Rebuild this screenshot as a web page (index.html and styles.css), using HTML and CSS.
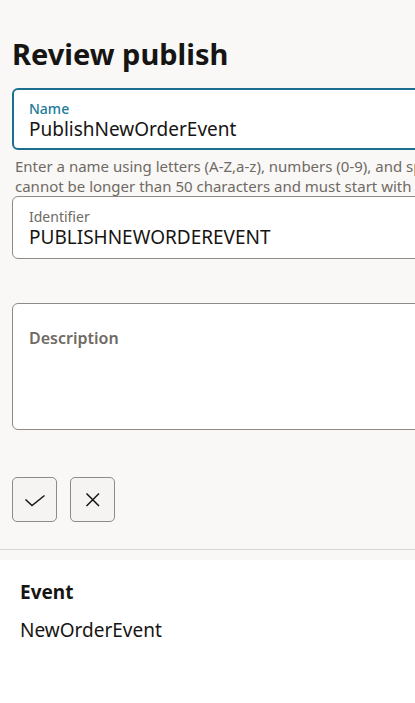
FILE: index.html
```html
<!DOCTYPE html>
<html lang="en">
<head>
<meta charset="utf-8">
<title>Review publish</title>
<link rel="stylesheet" href="styles.css">
</head>
<body>
<div class="top">
  <h1 class="title">Review publish</h1>
  <div class="field field-focus">
    <div class="label label-focus">Name</div>
    <div class="value">PublishNewOrderEvent</div>
  </div>
  <div class="help">
    <span class="help-line">Enter a name using letters (A-Z,a-z), numbers (0-9), and special characters (_ -). The name</span>
    <span class="help-line">cannot be longer than 50 characters and must start with a letter.</span>
  </div>
  <div class="field field-plain">
    <div class="label">Identifier</div>
    <div class="value">PUBLISHNEWORDEREVENT</div>
  </div>
  <div class="field area">
    <div class="area-label">Description</div>
  </div>
  <div class="buttons">
    <button class="btn" aria-label="Confirm">
      <svg width="24" height="24" viewBox="0 0 24 24"><path d="M2.5 11.5 L9 17.5 L21.5 7.5" fill="none" stroke="#161513" stroke-width="1.5"/></svg>
    </button>
    <button class="btn" aria-label="Cancel">
      <svg width="24" height="24" viewBox="0 0 24 24"><path d="M5.5 5.5 L18 18 M18 5.5 L5.5 18" fill="none" stroke="#161513" stroke-width="1.5"/></svg>
    </button>
  </div>
  <div class="divider"></div>
</div>
<div class="bottom">
  <div class="event-label">Event</div>
  <div class="event-value">NewOrderEvent</div>
</div>
</body>
</html>
```
FILE: styles.css
```css
html, body {
  margin: 0;
  padding: 0;
}
body {
  background: #ffffff;
  font-family: "Noto Sans", "Open Sans", sans-serif;
  color: #161513;
  overflow: hidden;
  width: 415px;
}
.top {
  background: #f9f8f6;
  padding: 36px 0 10px 12px;
}
.title {
  margin: 0 0 16px 0;
  font-size: 29px;
  line-height: 36px;
  font-weight: 700;
  color: #161513;
}
.field {
  width: 560px;
  box-sizing: border-box;
  background: #fff;
  border: 1px solid #8f8a85;
  border-radius: 6px;
}
.field-focus {
  border: 2px solid #1d6f8f;
  padding: 10px 15px 0 15px;
  height: 62px;
}
.field-plain {
  padding: 11px 16px 0 16px;
  height: 63px;
}
.label {
  font-size: 14px;
  line-height: 17px;
  color: #6f6a64;
}
.label-focus {
  color: #227a99;
  font-weight: 500;
}
.value {
  font-size: 19px;
  line-height: 24px;
  color: #161513;
}
.help {
  font-size: 15px;
  line-height: 20px;
  color: #6f6a64;
  padding: 6px 0 0 3px;
  height: 46px;
  box-sizing: border-box;
}
.help-line {
  display: block;
  white-space: nowrap;
}
.area {
  margin-top: 44px;
  height: 127px;
  padding: 24px 16px 0 16px;
}
.area-label {
  font-size: 16px;
  line-height: 20px;
  font-weight: 600;
  color: #6f6a64;
}
.buttons {
  display: flex;
  gap: 13px;
  margin-top: 47px;
}
.btn {
  width: 45px;
  height: 45px;
  box-sizing: border-box;
  border: 1px solid #8f8a85;
  border-radius: 5px;
  background: #f5f4f2;
  padding: 0;
  display: flex;
  align-items: center;
  justify-content: center;
}
.divider {
  margin: 27px 0 0 -12px;
  height: 1px;
  background: #dad7d3;
}
.bottom {
  background: #ffffff;
  padding: 20px 20px 0 20px;
}
.event-label {
  font-size: 19px;
  line-height: 24px;
  font-weight: 700;
}
.event-value {
  margin-top: 14px;
  font-size: 19px;
  line-height: 24px;
}
```
